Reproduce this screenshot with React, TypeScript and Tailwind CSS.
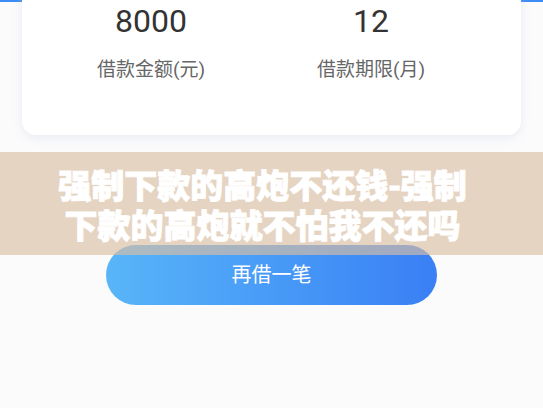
import React from "react";

const sans = "Roboto, 'Noto Sans CJK SC', 'Noto Sans', sans-serif";

function Stat({ value, label }: { value: string; label: string }) {
  return (
    <div className="w-[220px] flex flex-col items-center">
      <div className="text-[32px] leading-[38px] text-[#333333]">{value}</div>
      <div className="mt-[17px] text-[19px] leading-[26px] text-[#666666]">{label}</div>
    </div>
  );
}

export default function App() {
  return (
    <div
      className="relative w-[543px] h-[408px] overflow-hidden bg-[#fbfbfc]"
      style={{ fontFamily: sans }}
    >
      {/* blue header edge peeking above the card */}
      <div className="h-[2px] bg-[#3d8bf6]" />

      {/* loan summary card */}
      <div className="relative z-10 -mt-[22px] mx-[22px] h-[155px] rounded-[14px] bg-white shadow-[0_3px_10px_rgba(190,198,215,0.28)] pt-[22px] pl-[19px] flex">
        <Stat value="8000" label="借款金额(元)" />
        <Stat value="12" label="借款期限(月)" />
      </div>

      {/* action button */}
      <div className="mt-[110px] flex justify-center">
        <button className="w-[331px] h-[60px] rounded-full bg-gradient-to-r from-[#59b5f8] to-[#3a7ff5] text-white text-[20px] leading-none">
          再借一笔
        </button>
      </div>

      {/* title banner laid over the page */}
      <div className="absolute left-0 right-0 top-[152px] h-[103px] z-20 bg-[rgba(218,190,163,0.65)] flex items-center justify-center pr-[18px]">
        <div
          className="max-w-[420px] text-center text-white font-black text-[33px] leading-[40px] [-webkit-text-stroke:0.9px_white]"
          style={{ fontFamily: "'Noto Sans CJK SC', sans-serif" }}
        >
          强制下款的高炮不还钱-强制下款的高炮就不怕我不还吗
        </div>
      </div>
    </div>
  );
}
